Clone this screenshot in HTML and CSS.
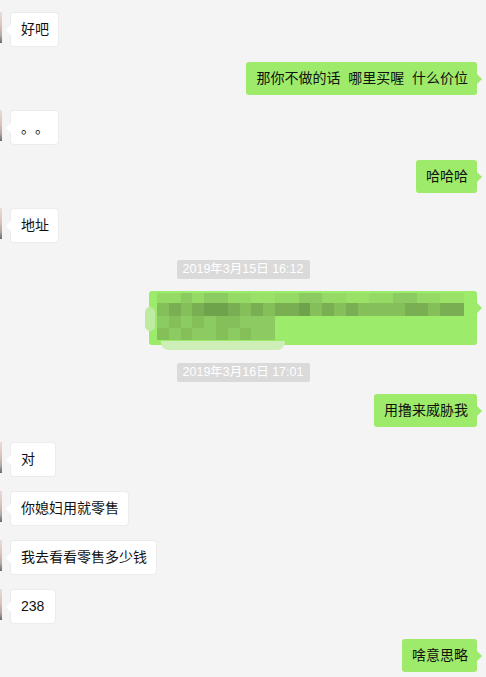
FILE: index.html
```html
<!DOCTYPE html>
<html lang="zh-CN">

<head>
    <meta charset="UTF-8">
    <meta name="viewport" content="width=device-width, initial-scale=1.0">
    <title>聊天记录</title>
    <link rel="stylesheet" href="styles.css">
</head>

<body>
    <div class="chat">
        <div class="msg left">
            <div class="avatar"></div>
            <div class="bubble">好吧</div>
        </div>
        <div class="msg right">
            <div class="bubble">那你不做的话&nbsp;&nbsp;哪里买喔&nbsp;&nbsp;什么价位</div>
        </div>
        <div class="msg left">
            <div class="avatar"></div>
            <div class="bubble cjk">。。</div>
        </div>
        <div class="msg right">
            <div class="bubble">哈哈哈</div>
        </div>
        <div class="msg left">
            <div class="avatar"></div>
            <div class="bubble">地址</div>
        </div>

        <div class="time">2019年3月15日 16:12</div>

        <!-- 打码的消息 -->
        <div class="msg right">
            <div class="bubble blurred">
                <div class="smudge-left"></div>
                <div class="smudge-bottom"></div>
                <div class="mosaic" id="mosaic"></div>
            </div>
        </div>

        <div class="time">2019年3月16日 17:01</div>

        <div class="msg right">
            <div class="bubble">用撸来威胁我</div>
        </div>
        <div class="msg left">
            <div class="avatar"></div>
            <div class="bubble">对</div>
        </div>
        <div class="msg left">
            <div class="avatar"></div>
            <div class="bubble">你媳妇用就零售</div>
        </div>
        <div class="msg left">
            <div class="avatar"></div>
            <div class="bubble">我去看看零售多少钱</div>
        </div>
        <div class="msg left">
            <div class="avatar"></div>
            <div class="bubble">238</div>
        </div>
        <div class="msg right">
            <div class="bubble">啥意思略</div>
        </div>
    </div>
    <script>
        // 马赛克色块 (每行一个字符串, 数字 = 色阶)
        const rows = [
            '44343344554433445544334455',
            '21210012121102121222211211',
            '3232322333',
            '2323323233'
        ];
        const mosaic = document.getElementById('mosaic');
        rows.forEach((row, i) => {
            const line = document.createElement('div');
            line.className = 'mrow mrow' + i;
            for (const c of row) {
                const cell = document.createElement('span');
                cell.className = 'cell c' + c;
                line.appendChild(cell);
            }
            mosaic.appendChild(line);
        });
    </script>
</body>

</html>
```
FILE: styles.css
```css
/* 聊天窗口样式 */

body {
    margin: 0;
    padding: 0;
    background-color: #f4f4f4;
    font-family: "Liberation Sans", "Noto Sans CJK SC", sans-serif;
    font-size: 14px;
    color: #111;
}

.chat {
    padding-top: 13px;
}

.msg {
    display: flex;
    align-items: flex-start;
    margin-bottom: 16px;
}

.msg.right {
    justify-content: flex-end;
    padding-right: 9px;
}

.avatar {
    width: 2px;
    height: 31px;
    margin-top: -1px;
    background: linear-gradient(#eadcd8, #d9c2bd 45%, #b5aaa6 75%, #5f6e6b);
}

.bubble {
    position: relative;
    min-width: 44px;
    height: 33px;
    line-height: 21px;
    padding: 6px 9px 6px 10px;
    box-sizing: border-box;
    border-radius: 3px;
    white-space: nowrap;
}

.bubble.cjk {
    font-family: "Noto Sans CJK SC", sans-serif;
    text-spacing-trim: space-all;
    width: 47px;
}

.left .bubble {
    margin-left: 9px;
    background-color: #fff;
    box-shadow: 0 0 0 1px #ececec;
}

.right .bubble {
    background-color: #9eea6a;
}

.bubble::after {
    content: "";
    position: absolute;
    top: 12px;
    border: 5px solid transparent;
}

.left .bubble::after {
    left: -10px;
    border-right-color: #fff;
}

.right .bubble::after {
    right: -10px;
    border-left-color: #9eea6a;
}

.time {
    width: 133px;
    height: 19px;
    margin: 18px auto 12px;
    line-height: 19px;
    text-align: center;
    font-size: 12.5px;
    color: #fff;
    background-color: #dadada;
    border-radius: 2px;
}

/* 打码的消息 */
.bubble.blurred {
    width: 328px;
    height: 54px;
    padding: 2px 0 0 8px;
    background-color: #9deb6a;
}

.smudge-left {
    position: absolute;
    left: -4px;
    top: 16px;
    width: 10px;
    height: 24px;
    border-radius: 6px;
    background-color: #bfeaa2;
}

.smudge-bottom {
    position: absolute;
    left: 12px;
    bottom: -5px;
    width: 124px;
    height: 9px;
    border-radius: 0 0 8px 8px;
    background-color: #cdeeb7;
}

.mosaic {
    position: relative;
}

.mrow {
    display: flex;
}

.mrow0 {
    height: 10px;
}

.mrow1 {
    height: 13px;
}

.mrow2,
.mrow3 {
    height: 12px;
}

.cell {
    width: 11.8px;
    flex: none;
}

.c0 { background-color: #6ea24b; }
.c1 { background-color: #7aae53; }
.c2 { background-color: #84bf5a; }
.c3 { background-color: #8ccb61; }
.c4 { background-color: #94da64; }
.c5 { background-color: #99e267; }
```
